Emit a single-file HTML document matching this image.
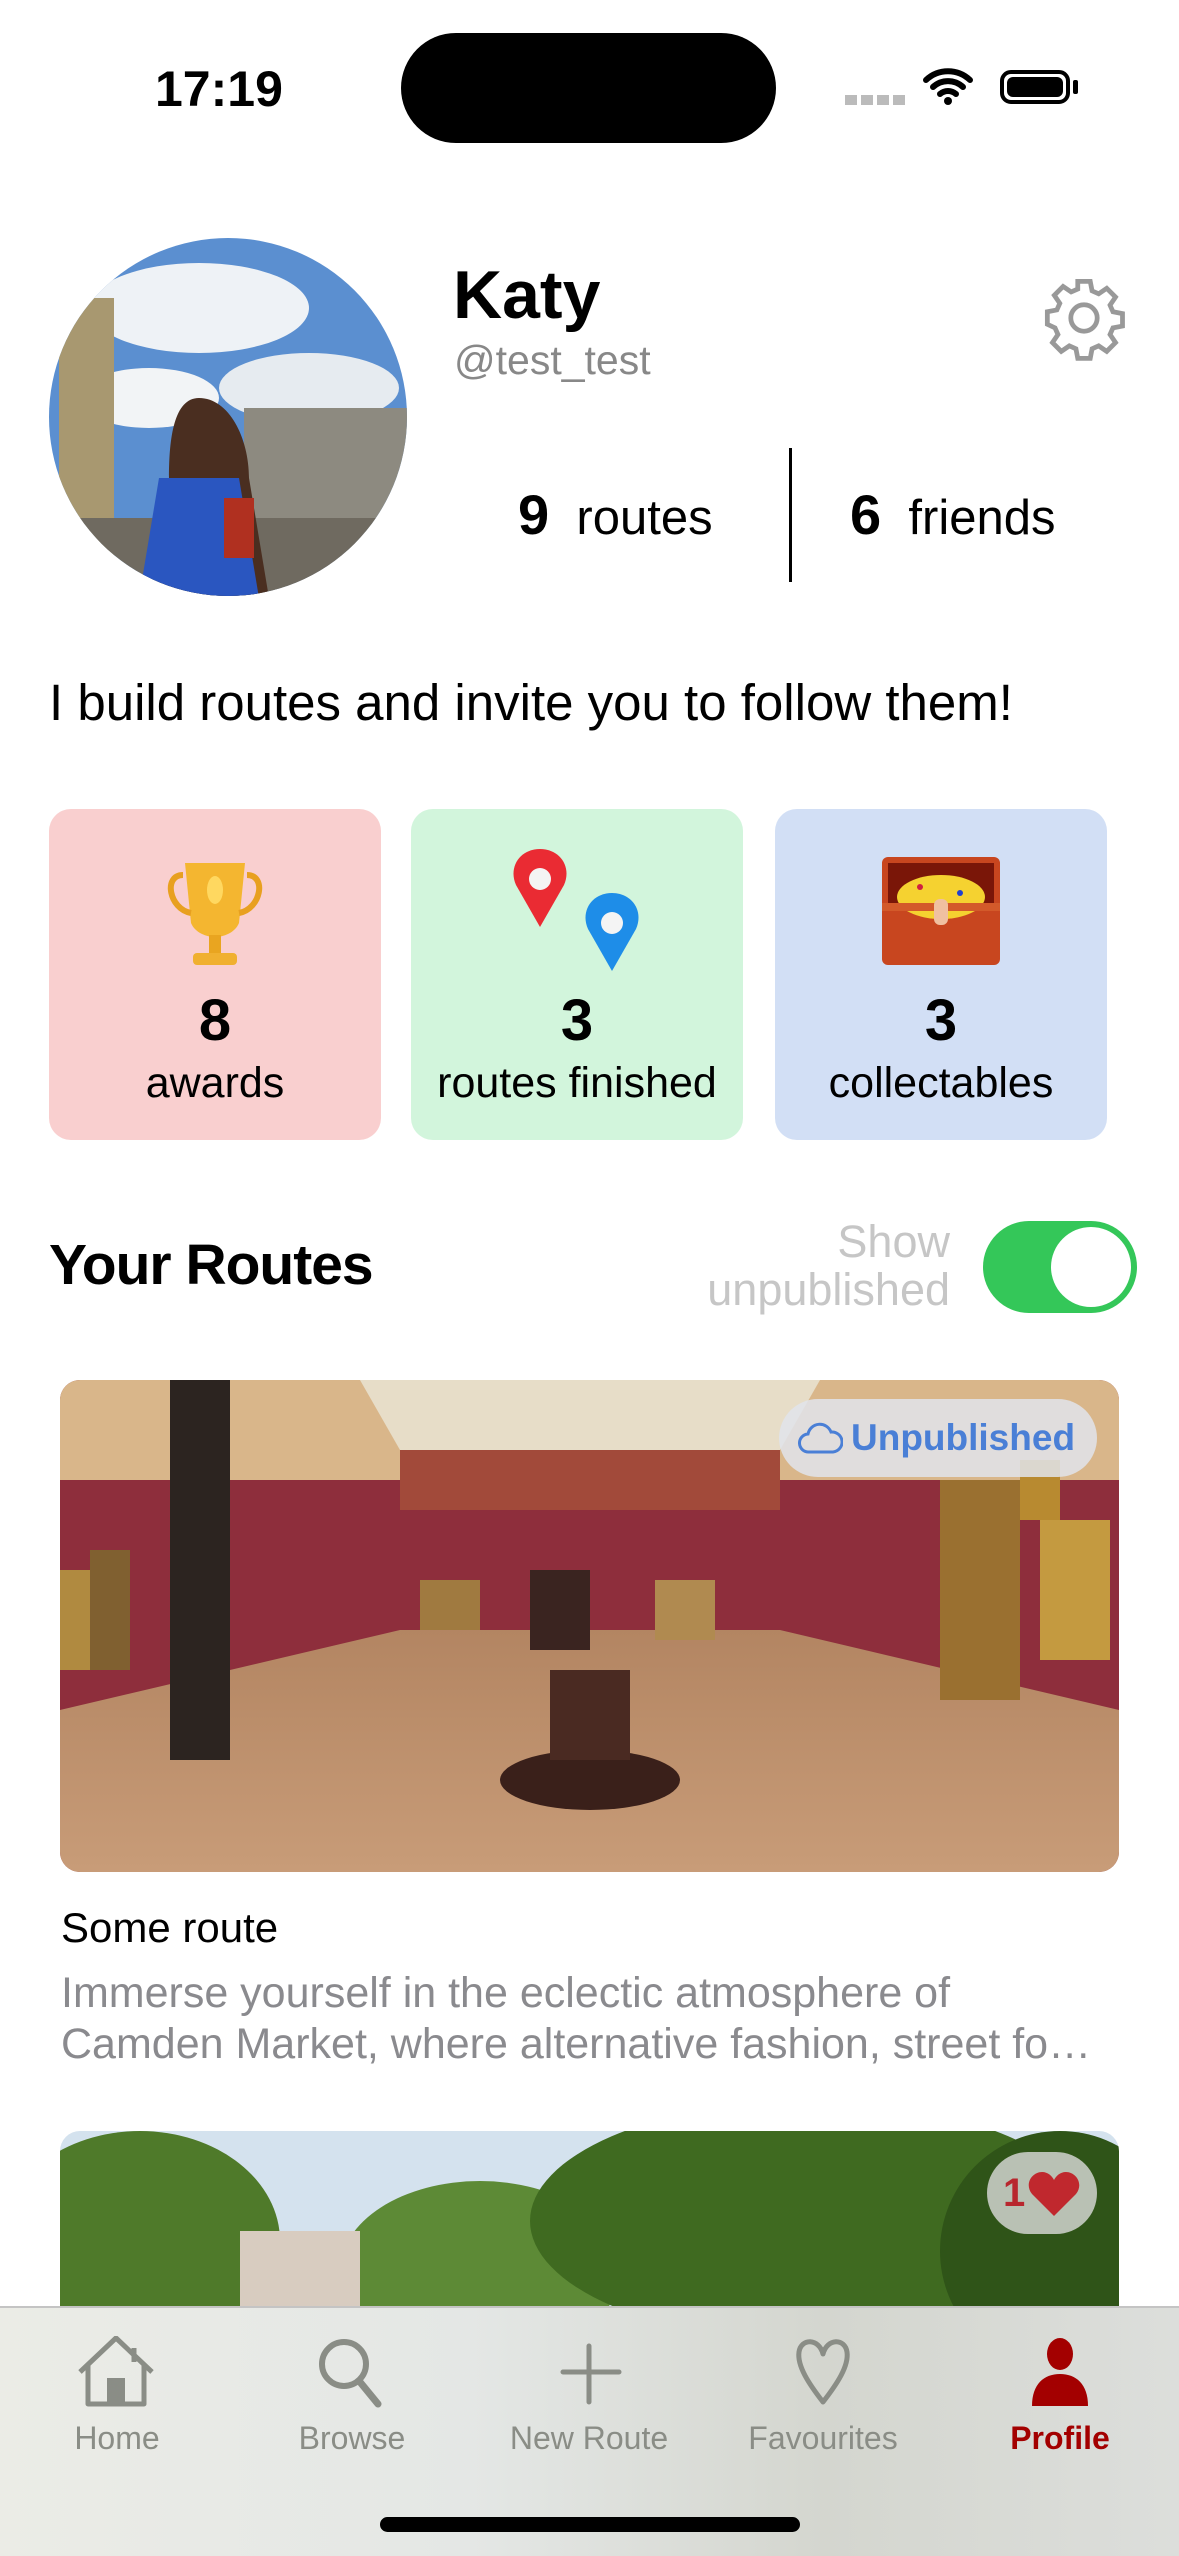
<!DOCTYPE html>
<html><head><meta charset="utf-8"><style>
*{margin:0;padding:0;box-sizing:border-box}
body{width:1179px;height:2556px;overflow:hidden;background:#fff;font-family:"Liberation Sans",sans-serif;position:relative;color:#000}
.a{position:absolute}
.card{position:absolute;top:809px;width:332px;height:331px;border-radius:22px;text-align:center}
.card .n{position:absolute;top:178px;width:100%;font-size:58px;font-weight:bold}
.card .l{position:absolute;top:250px;width:100%;font-size:43px}
.tab{position:absolute;top:2336px;width:200px;text-align:center;color:#8a8d86;font-size:32px}
.tab svg{display:block;margin:0 auto 12px}
</style></head><body>
<div class="a" style="left:155px;top:60px;font-size:50px;font-weight:bold">17:19</div>
<div class="a" style="left:401px;top:33px;width:375px;height:110px;border-radius:55px;background:#000"></div>
<div class="a" style="left:845px;top:95px;width:60px;height:10px;background:repeating-linear-gradient(90deg,#bbb 0 12px,transparent 12px 16px)"></div>
<svg class="a" style="left:922px;top:66px" width="52" height="40" viewBox="0 0 52 40"><path d="M4 14a32 32 0 0 1 44 0M11 21a22 22 0 0 1 30 0M18 28a12 12 0 0 1 16 0" stroke="#000" stroke-width="6" fill="none" stroke-linecap="round"/><circle cx="26" cy="35" r="4"/></svg>
<div class="a" style="left:1000px;top:70px;width:70px;height:34px;border:4px solid #000;border-radius:11px"><div style="margin:3px;height:20px;background:#000;border-radius:6px"></div></div>
<div class="a" style="left:1073px;top:80px;width:5px;height:14px;background:#000;border-radius:2px"></div>

<svg class="a" style="left:49px;top:238px" width="358" height="358" viewBox="0 0 358 358"><defs><clipPath id="c"><circle cx="179" cy="179" r="179"/></clipPath></defs><g clip-path="url(#c)"><rect width="358" height="358" fill="#5b8fd0"/><ellipse cx="150" cy="70" rx="110" ry="45" fill="#eef2f6"/><ellipse cx="260" cy="150" rx="90" ry="35" fill="#e6ebf0"/><ellipse cx="100" cy="160" rx="70" ry="30" fill="#f2f4f6"/><rect x="195" y="170" width="170" height="190" fill="#8d8a80"/><rect x="10" y="60" width="55" height="300" fill="#a89870"/><rect x="0" y="280" width="358" height="80" fill="#6f6a60"/><path d="M150 160c-25 0-30 40-30 80l-20 120h120l-20-120c0-40-20-80-50-80z" fill="#4a2e20"/><path d="M110 240h80l20 120H90z" fill="#2a56c0"/><rect x="175" y="260" width="30" height="60" fill="#b03020"/></g></svg>

<div class="a" style="left:453px;top:256px;font-size:68px;font-weight:bold">Katy</div>
<div class="a" style="left:454px;top:337px;font-size:41px;color:#888">@test_test</div>
<svg class="a" style="left:1040px;top:274px" width="88" height="88" viewBox="0 0 24 24"><g fill="none" stroke="#999" stroke-width="1.3"><path d="M10.3 2h3.4l.5 2.6 1.8.8 2.2-1.5 2.4 2.4-1.5 2.2.8 1.8 2.6.5v3.4l-2.6.5-.8 1.8 1.5 2.2-2.4 2.4-2.2-1.5-1.8.8-.5 2.6h-3.4l-.5-2.6-1.8-.8-2.2 1.5-2.4-2.4 1.5-2.2-.8-1.8L2 13.7v-3.4l2.6-.5.8-1.8-1.5-2.2 2.4-2.4 2.2 1.5 1.8-.8z"/><circle cx="12" cy="12" r="3.6"/></g></svg>
<div class="a" style="left:518px;top:482px;font-size:49px"><b style="font-size:56px">9</b>&nbsp; routes</div>
<div class="a" style="left:789px;top:448px;width:3px;height:134px;background:#000"></div>
<div class="a" style="left:850px;top:482px;font-size:49px"><b style="font-size:56px">6</b>&nbsp; friends</div>
<div class="a" style="left:49px;top:673px;font-size:51px">I build routes and invite you to follow them!</div>

<div class="card" style="left:49px;background:#f9cfcf"><svg style="margin-top:46px" width="120" height="120" viewBox="0 0 120 120"><path d="M30 8h60l-6 60c-4 10-16 14-24 14s-20-4-24-14z" fill="#f4b630"/><path d="M28 20c-20 0-14 34 8 38M92 20c20 0 14 34-8 38" stroke="#e8a020" stroke-width="6" fill="none"/><rect x="54" y="80" width="12" height="20" fill="#e9a520"/><rect x="38" y="98" width="44" height="12" rx="4" fill="#f0b030"/><ellipse cx="60" cy="35" rx="8" ry="14" fill="#ffd860"/></svg><div class="n">8</div><div class="l">awards</div></div>
<div class="card" style="left:411px;background:#d2f5dc"><svg style="margin-top:40px" width="150" height="130" viewBox="0 0 150 130"><path d="M38 0c-20 0-32 18-24 36l24 42 24-42C70 18 58 0 38 0z" fill="#ea2b33"/><circle cx="38" cy="30" r="11" fill="#f4f4f4"/><path d="M110 44c-20 0-32 18-24 36l24 42 24-42c8-18-4-36-24-36z" fill="#1e8de8"/><circle cx="110" cy="74" r="11" fill="#f4f4f4"/></svg><div class="n">3</div><div class="l">routes finished</div></div>
<div class="card" style="left:775px;background:#d2dff5"><svg style="margin-top:46px" width="122" height="112" viewBox="0 0 122 112"><rect x="2" y="2" width="118" height="108" rx="6" fill="#c8461f"/><rect x="8" y="8" width="106" height="40" fill="#7a1608"/><ellipse cx="61" cy="42" rx="44" ry="22" fill="#f5d230"/><rect x="2" y="48" width="118" height="8" fill="#d35a2a"/><rect x="54" y="44" width="14" height="26" rx="6" fill="#f0c0a0"/><circle cx="40" cy="32" r="3" fill="#d02040"/><circle cx="80" cy="38" r="3" fill="#2040d0"/></svg><div class="n">3</div><div class="l">collectables</div></div>

<div class="a" style="left:49px;top:1232px;font-size:57px;font-weight:bold;letter-spacing:-1px">Your Routes</div>
<div class="a" style="left:650px;top:1218px;width:300px;text-align:right;font-size:45px;line-height:48px;color:#c6c6c6">Show<br>unpublished</div>
<div class="a" style="left:983px;top:1221px;width:154px;height:92px;border-radius:46px;background:#34c759"><div style="position:absolute;right:6px;top:6px;width:80px;height:80px;border-radius:40px;background:#fff"></div></div>

<svg class="a" style="left:60px;top:1380px" width="1059" height="492" viewBox="0 0 1059 492"><defs><clipPath id="r"><rect width="1059" height="492" rx="20"/></clipPath><linearGradient id="f" x1="0" y1="0" x2="0" y2="1"><stop offset="0" stop-color="#b38562"/><stop offset="1" stop-color="#c89c78"/></linearGradient></defs><g clip-path="url(#r)"><rect width="1059" height="492" fill="#8e2e3c"/><rect width="1059" height="100" fill="#d9b68a"/><path d="M300 0h460l-40 70H340z" fill="#e7ddc8"/><rect x="340" y="70" width="380" height="60" fill="#a24a3a"/><path d="M0 330L340 250H720L1059 330V492H0z" fill="url(#f)"/><rect x="110" y="0" width="60" height="380" fill="#2c2420"/><rect x="960" y="80" width="40" height="60" fill="#b88a30"/><rect x="980" y="140" width="70" height="140" fill="#c49a40"/><rect x="880" y="100" width="80" height="220" fill="#9a7030"/><rect x="0" y="190" width="30" height="100" fill="#b08a40"/><rect x="30" y="170" width="40" height="120" fill="#806030"/><rect x="360" y="200" width="60" height="50" fill="#a07a40"/><rect x="595" y="200" width="60" height="60" fill="#b08a50"/><rect x="470" y="190" width="60" height="80" fill="#3a2420"/><ellipse cx="530" cy="400" rx="90" ry="30" fill="#3a201a"/><rect x="490" y="290" width="80" height="90" fill="#4a2a22"/></g></svg>
<div class="a" style="left:779px;top:1399px;width:318px;height:78px;border-radius:39px;background:rgba(225,228,235,.85);color:#4a7fd6;font-size:37px;font-weight:bold;line-height:78px;padding-left:72px">Unpublished</div>
<svg class="a" style="left:797px;top:1420px" width="46" height="36" viewBox="0 0 46 36"><path d="M12 32a9 9 0 0 1-1-18 12 12 0 0 1 23-2 10 10 0 0 1 2 20z" fill="none" stroke="#4a7fd6" stroke-width="3"/></svg>

<div class="a" style="left:61px;top:1904px;font-size:42px">Some route</div>
<div class="a" style="left:61px;top:1968px;font-size:43px;line-height:51px;color:#8a8a8e;width:1080px;white-space:nowrap">Immerse yourself in the eclectic atmosphere of<br>Camden Market, where alternative fashion, street fo…</div>

<svg class="a" style="left:60px;top:2131px" width="1059" height="200" viewBox="0 0 1059 200"><defs><clipPath id="s"><rect width="1059" height="400" rx="20"/></clipPath></defs><g clip-path="url(#s)"><rect width="1059" height="200" fill="#d4e2ee"/><ellipse cx="80" cy="110" rx="140" ry="110" fill="#4f7a2a"/><ellipse cx="420" cy="140" rx="140" ry="90" fill="#5d8a36"/><ellipse cx="750" cy="90" rx="280" ry="120" fill="#3f6a20"/><ellipse cx="1000" cy="120" rx="120" ry="120" fill="#2f5418"/><rect x="180" y="100" width="120" height="100" fill="#d8ccc0"/></g></svg>
<div class="a" style="left:987px;top:2152px;width:110px;height:82px;border-radius:41px;background:rgba(220,220,220,.8);color:#b8272e;font-size:40px;font-weight:bold;line-height:82px;padding-left:16px">1</div>
<svg class="a" style="left:1028px;top:2172px" width="52" height="44" viewBox="0 0 52 44"><path d="M26 44L4 22C-4 12 4 0 14 0c6 0 10 4 12 8 2-4 6-8 12-8 10 0 18 12 10 22z" fill="#c0282e"/></svg>

<div class="a" style="left:0;top:2306px;width:1179px;height:250px;background:linear-gradient(90deg,#ebece6,#e4e7e5 40%,#d4d6cf 70%,#dcdedb);border-top:2px solid #c4c4c4"></div>
<div class="tab" style="left:17px"><svg width="86" height="72" viewBox="0 0 86 72"><path d="M6 36L42 2l36 34M14 28v40h56V28M60 12v14" fill="none" stroke="#8a8d86" stroke-width="5" stroke-linejoin="round"/><rect x="33" y="42" width="18" height="26" fill="#8a8d86"/></svg>Home</div>
<div class="tab" style="left:252px"><svg width="72" height="72" viewBox="0 0 72 72"><circle cx="28" cy="28" r="22" fill="none" stroke="#8a8d86" stroke-width="6"/><path d="M44 46l18 22" stroke="#8a8d86" stroke-width="7" stroke-linecap="round"/></svg>Browse</div>
<div class="tab" style="left:489px"><svg width="72" height="72" viewBox="0 0 72 72"><path d="M36 10v56M10 36h56" stroke="#8a8d86" stroke-width="5" stroke-linecap="round"/></svg>New Route</div>
<div class="tab" style="left:723px"><svg width="72" height="72" viewBox="0 0 72 72"><path d="M36 66C22 48 10 30 12 16 14 2 32 2 36 18 40 2 58 2 60 16 62 30 50 48 36 66z" fill="none" stroke="#8a8d86" stroke-width="5" stroke-linejoin="round"/></svg>Favourites</div>
<div class="tab" style="left:960px;color:#a30000;font-weight:bold"><svg width="72" height="72" viewBox="0 0 72 72"><ellipse cx="36" cy="18" rx="13" ry="16" fill="#a30000"/><path d="M8 70c0-22 12-32 28-32s28 10 28 32z" fill="#a30000"/></svg>Profile</div>
<div class="a" style="left:380px;top:2517px;width:420px;height:15px;border-radius:8px;background:#000"></div>
</body></html>
